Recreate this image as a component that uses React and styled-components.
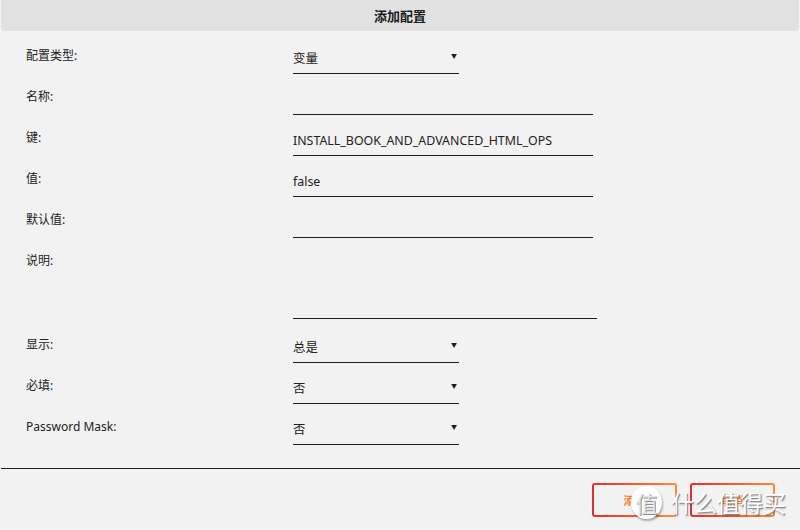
import styled, { createGlobalStyle } from "styled-components";

const GlobalStyle = createGlobalStyle`
  html, body {
    margin: 0;
    padding: 0;
    background: #f2f2f2;
  }
  body {
    font-family: "Noto Sans", "Noto Sans CJK SC", sans-serif;
    color: #222;
  }
`;

const Dialog = styled.div`
  position: relative;
  width: 800px;
  height: 530px;
  background: #f2f2f2;
  overflow: hidden;
`;

const Header = styled.div`
  margin: 0 1px;
  height: 31px;
  background: #e1e1e1;
  border-radius: 0 0 4px 4px;
  display: flex;
  align-items: center;
  justify-content: center;
  font-size: 13px;
  font-weight: 700;
  color: #1a1a1a;
`;

const Form = styled.div`
  padding: 2px 0 0 26px;
  display: flex;
  flex-direction: column;
`;

const Row = styled.div`
  display: flex;
  align-items: flex-start;
  margin-bottom: ${(p) => (p.tall ? "3px" : "0")};
`;

const Label = styled.div`
  width: 267px;
  padding-top: 15px;
  font-size: 12px;
  line-height: 16px;
`;

const Field = styled.div`
  box-sizing: border-box;
  width: ${(p) => p.width}px;
  height: ${(p) => (p.tall ? 81 : 41)}px;
  border-bottom: 1px solid #1e1e1e;
  display: flex;
  align-items: flex-end;
  justify-content: space-between;
  padding-bottom: 6px;
  font-size: 12.4px;
  line-height: 16px;
`;

const Arrow = styled.span`
  font-size: 6px;
  line-height: 6px;
  margin: 0 2px 8px 0;
  color: #1a1a1a;
`;

const Separator = styled.div`
  margin: 23px 0 0 1px;
  border-top: 1px solid #222;
`;

const Footer = styled.div`
  display: flex;
  justify-content: flex-end;
  gap: 13px;
  padding: 14px 25px 0 0;
`;

const Button = styled.div`
  box-sizing: border-box;
  width: 85px;
  height: 34px;
  border: 2px solid transparent;
  border-radius: 3px;
  background:
    linear-gradient(#f2f2f2, #f2f2f2) padding-box,
    linear-gradient(90deg, #e52d2d, #ff8c2e) border-box;
  display: flex;
  align-items: center;
  justify-content: center;
  font-size: 11px;
  font-weight: 700;
  color: #ff7a2a;
`;

const Watermark = styled.div`
  position: absolute;
  left: 631px;
  top: 485px;
  display: flex;
  align-items: center;
  gap: 9px;
  pointer-events: none;
`;

const Badge = styled.div`
  width: 31px;
  height: 33px;
  border-radius: 50%;
  background: #fff;
  box-shadow: 1px 2px 2px rgba(0, 0, 0, 0.3);
  display: flex;
  align-items: center;
  justify-content: center;
  font-size: 22px;
  color: #e6e6e6;
  font-family: "Noto Sans CJK SC", sans-serif;
  text-shadow: 1px 1px 0 #8a8a8a;
`;

const MarkText = styled.div`
  font-family: "Noto Sans CJK SC", sans-serif;
  font-size: 23px;
  color: #fff;
  text-shadow: 1px 1px 0 #8c8c8c, 1px 2px 2px rgba(0, 0, 0, 0.25);
`;

const rows = [
  { label: "配置类型:", value: "变量", select: true },
  { label: "名称:", value: "" },
  { label: "键:", value: "INSTALL_BOOK_AND_ADVANCED_HTML_OPS" },
  { label: "值:", value: "false" },
  { label: "默认值:", value: "" },
  { label: "说明:", value: "", tall: true },
  { label: "显示:", value: "总是", select: true },
  { label: "必填:", value: "否", select: true },
  { label: "Password Mask:", value: "否", select: true },
];

export default function App() {
  return (
    <Dialog>
      <GlobalStyle />
      <Header>添加配置</Header>
      <Form>
        {rows.map((r) => (
          <Row key={r.label} tall={r.tall}>
            <Label>{r.label}</Label>
            <Field width={r.select ? 166 : r.tall ? 304 : 300} tall={r.tall}>
              <span>{r.value}</span>
              {r.select && <Arrow>▼</Arrow>}
            </Field>
          </Row>
        ))}
      </Form>
      <Separator />
      <Footer>
        <Button>添加</Button>
        <Button>取消</Button>
      </Footer>
      <Watermark>
        <Badge>值</Badge>
        <MarkText>什么值得买</MarkText>
      </Watermark>
    </Dialog>
  );
}
